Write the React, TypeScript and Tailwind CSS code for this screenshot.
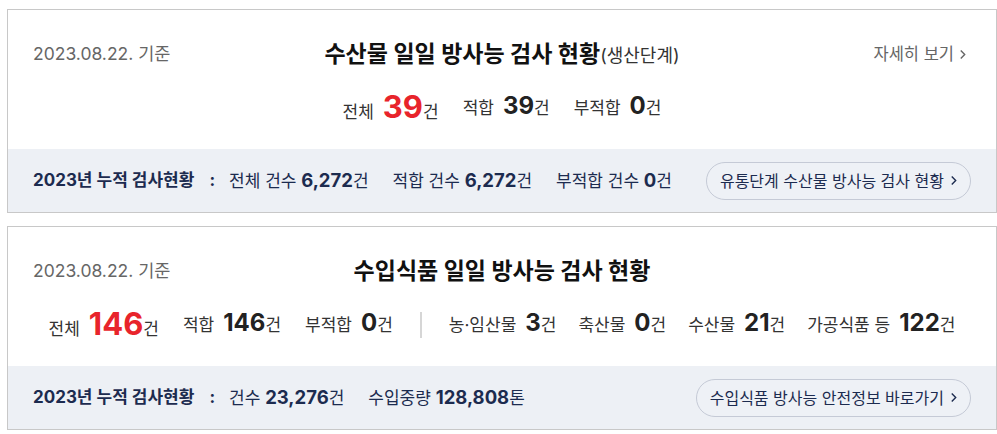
import { FC, ReactNode } from "react";

type Stat = { label: string; value: string; highlight?: boolean };

const Chevron: FC<{ className?: string }> = ({ className }) => (
  <svg viewBox="0 0 8 12" className={className} fill="none" stroke="currentColor" strokeWidth={1.6}>
    <path d="M2 1.5 L6.5 6 L2 10.5" />
  </svg>
);

const StatItem: FC<Stat> = ({ label, value, highlight }) => (
  <div className="flex items-baseline text-[17px] text-[#333]">
    <span>{label}</span>
    {highlight ? (
      <span className="ml-[9px] text-[31px] font-bold leading-none text-[#e8242b] font-['Inter',sans-serif]">{value}</span>
    ) : (
      <span className="ml-[9px] text-[24px] font-bold leading-none text-[#222] font-['Inter',sans-serif]">{value}</span>
    )}
    <span>건</span>
  </div>
);

const PillLink: FC<{ children: ReactNode }> = ({ children }) => (
  <button className="flex h-[38px] items-center gap-[6px] rounded-full border border-[#c5cad6] bg-[#eef1f6] px-[13px] text-[16px] text-[#1c2b4f]">
    <span>{children}</span>
    <Chevron className="h-[11px] w-[7px]" />
  </button>
);

const Card: FC<{ title: ReactNode; showMore?: boolean; stats: ReactNode; summary: ReactNode; link: string }> = ({
  title,
  showMore,
  stats,
  summary,
  link,
}) => (
  <section className="border border-[#c8c8c8] bg-white">
    <div className="flex h-[139px] flex-col px-[25px] pt-[27px]">
      <div className="grid h-[30px] grid-cols-[1fr_auto_1fr] items-center">
        <span className="text-[17.5px] text-[#666]">2023.08.22. 기준</span>
        <h2 className="text-[23px] font-bold text-[#111]">{title}</h2>
        {showMore ? (
          <a className="flex items-center justify-self-end gap-[5px] pr-[5px] text-[16.5px] text-[#666]">
            자세히 보기
            <Chevron className="h-[11px] w-[7px]" />
          </a>
        ) : (
          <span />
        )}
      </div>
      <div className="mt-[23px] flex h-[36px] items-center justify-center">{stats}</div>
    </div>
    <div className="flex h-[63px] items-center justify-between bg-[#edf0f5] px-[25px] text-[17px] text-[#1c2b4f]">
      <div className="flex items-center">
        <span className="font-bold">2023년 누적 검사현황</span>
        <span className="ml-[15px] mr-[14px] font-bold">:</span>
        {summary}
      </div>
      <PillLink>{link}</PillLink>
    </div>
  </section>
);

const SummaryItem: FC<{ label: string; value: string; unit: string }> = ({ label, value, unit }) => (
  <span className="mr-[24px] last:mr-0">
    {label} <b className="text-[18.5px] font-bold font-['Inter',sans-serif]">{value}</b>
    {unit}
  </span>
);

export default function App() {
  const row1: Stat[] = [
    { label: "전체", value: "39", highlight: true },
    { label: "적합", value: "39" },
    { label: "부적합", value: "0" },
  ];
  const row2a: Stat[] = [
    { label: "전체", value: "146", highlight: true },
    { label: "적합", value: "146" },
    { label: "부적합", value: "0" },
  ];
  const row2b: Stat[] = [
    { label: "농·임산물", value: "3" },
    { label: "축산물", value: "0" },
    { label: "수산물", value: "21" },
    { label: "가공식품 등", value: "122" },
  ];

  return (
    <div className="min-h-screen bg-white pl-[7px] pt-[9px] font-['Inter','Noto_Sans_CJK_KR',sans-serif]">
      <div className="flex flex-col gap-[13px]">
        <Card
          title={
            <>
              수산물 일일 방사능 검사 현황<span className="text-[18px] font-normal text-[#333]">(생산단계)</span>
            </>
          }
          showMore
          stats={
            <div className="flex items-center gap-[24px]">
              {row1.map((s) => (
                <StatItem key={s.label} {...s} />
              ))}
            </div>
          }
          summary={
            <>
              <SummaryItem label="전체 건수" value="6,272" unit="건" />
              <SummaryItem label="적합 건수" value="6,272" unit="건" />
              <SummaryItem label="부적합 건수" value="0" unit="건" />
            </>
          }
          link="유통단계 수산물 방사능 검사 현황"
        />
        <Card
          title="수입식품 일일 방사능 검사 현황"
          stats={
            <div className="flex items-center">
              <div className="flex items-center gap-[24px]">
                {row2a.map((s) => (
                  <StatItem key={s.label} {...s} />
                ))}
              </div>
              <div className="mx-[27px] h-[26px] w-[2px] bg-[#d6d6d6]" />
              <div className="flex items-center gap-[22px]">
                {row2b.map((s) => (
                  <StatItem key={s.label} {...s} />
                ))}
              </div>
            </div>
          }
          summary={
            <>
              <SummaryItem label="건수" value="23,276" unit="건" />
              <SummaryItem label="수입중량" value="128,808" unit="톤" />
            </>
          }
          link="수입식품 방사능 안전정보 바로가기"
        />
      </div>
    </div>
  );
}
